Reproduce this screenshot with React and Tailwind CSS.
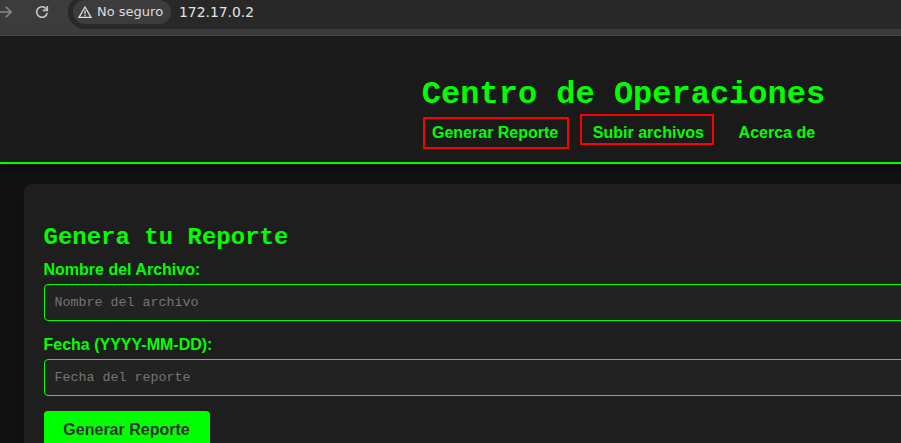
function BrowserBar() {
  return (
    <div className="flex h-9 shrink-0 items-start border-b border-[#4d4d4d] bg-[#3c3c3c] font-['DejaVu_Sans',sans-serif]">
      <svg className="mt-1 w-4 shrink-0 h-4" viewBox="0 0 16 16" fill="none" stroke="#8a8a8a" strokeWidth="1.6">
        <path d="M-2 8H11M5.8 2.7L11.1 8L5.8 13.3" />
      </svg>
      <svg className="mt-1 ml-[18px] w-4 h-4 shrink-0" viewBox="0 0 16 16" fill="none" stroke="#c7c7c7" strokeWidth="1.6">
        <path d="M13.2 9A5.3 5.3 0 1 1 12 4.5L13 5.6" />
        <path d="M13.3 2V6.4H8.8" />
      </svg>
      <div className="-mt-[5px] ml-[18px] flex h-[34px] flex-1 items-center rounded-l-full bg-[#282828] pl-[5px]">
        <div className="flex h-6 w-[98px] items-center rounded-full bg-[#3c3c3c] pl-[5px]">
          <svg className="h-[14px] w-[14px] shrink-0" viewBox="0 0 14 14" fill="none" stroke="#dedede" strokeWidth="1.3">
            <path d="M7 2L13 12.3H1Z" />
            <path d="M7 5.5V9M7 9.8V11.2" />
          </svg>
          <span className="ml-[5px] whitespace-nowrap text-[13px] leading-4 text-[#dedede]">No seguro</span>
        </div>
        <span className="ml-2 text-[13.9px] leading-4 text-[#e3e3e3]">172.17.0.2</span>
      </div>
    </div>
  );
}

function Field({ label, placeholder }) {
  return (
    <label className="mb-[15px] block">
      <span className="mb-[5px] block h-[18px] text-base leading-[18px] font-bold">{label}</span>
      <input
        type="text"
        placeholder={placeholder}
        className="block h-[37px] w-full rounded border border-[#00ff00] bg-[#222] px-[10px] font-['Liberation_Mono',monospace] text-[13.3333px] placeholder:text-[#757575]"
      />
    </label>
  );
}

export default function App() {
  return (
    <div className="flex h-[443px] w-[901px] flex-col overflow-hidden bg-[#121212] font-['Liberation_Sans',sans-serif] text-[#00ff00]">
      <BrowserBar />
      <div className="w-[1247px] flex-1">
        <header className="flex h-32 flex-col items-center border-b-2 border-[#00ff00] bg-[#1a1a1a] pt-[41px] shadow-[0_4px_8px_rgba(0,0,0,0.5)]">
          <h1 className="h-[35px] font-['Liberation_Mono',monospace] text-[32px] leading-9 font-bold">Centro de Operaciones</h1>
          <nav className="flex w-[401px] items-start text-base leading-[18px] font-bold whitespace-nowrap">
            <a className="mt-[5px] h-8 w-[146px] border-2 border-[#ff0000] pt-[5px] pl-[7px]">Generar Reporte</a>
            <a className="mt-[2px] ml-[11px] h-[31px] w-[134px] border-2 border-[#ff0000] pt-2 pl-[10.8px]">Subir archivos</a>
            <a className="mt-3 ml-[24.6px]">Acerca de</a>
          </nav>
        </header>
        <main className="mt-5 ml-[23.5px] h-[400px] w-[1200px] rounded-lg bg-[#1e1e1e] px-5 pt-10 shadow-[0_4px_8px_rgba(0,0,0,0.3)]">
          <h2 className="mb-[9px] h-7 font-['Liberation_Mono',monospace] text-2xl leading-7 font-bold">Genera tu Reporte</h2>
          <Field label="Nombre del Archivo:" placeholder="Nombre del archivo" />
          <Field label="Fecha (YYYY-MM-DD):" placeholder="Fecha del reporte" />
          <button className="block h-[38px] w-[166px] rounded bg-[#00ff00] text-base leading-[18px] font-bold text-[#333]">
            Generar Reporte
          </button>
        </main>
      </div>
    </div>
  );
}
